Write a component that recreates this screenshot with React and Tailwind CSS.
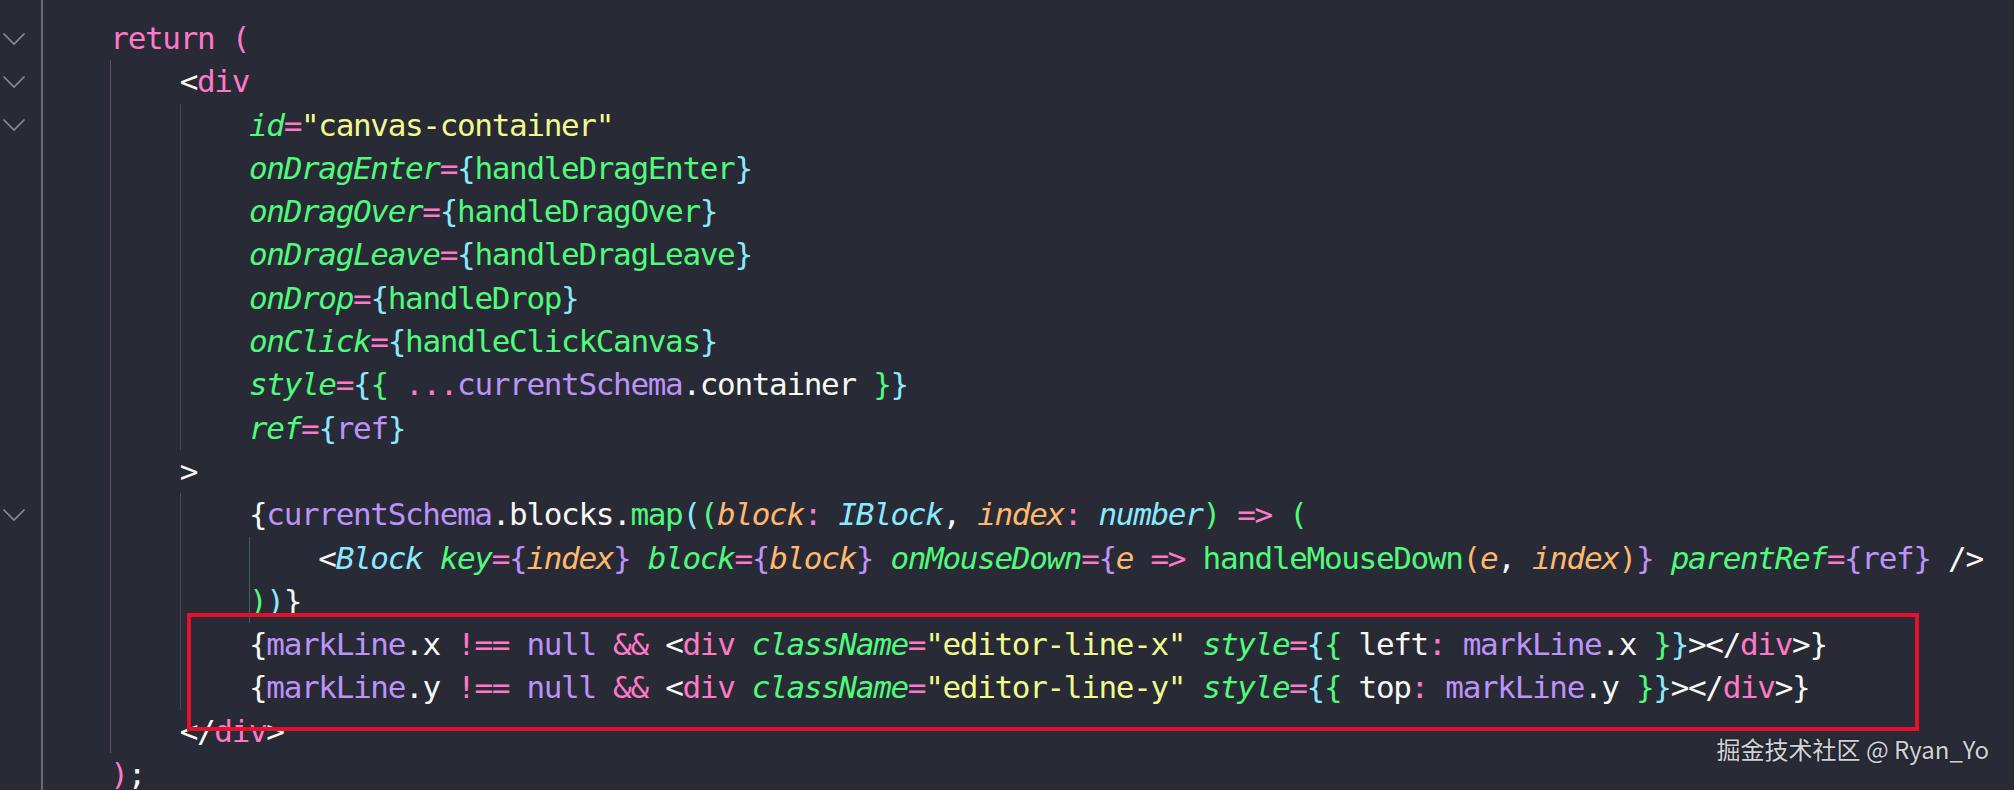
const C = {
  pk: "text-[#ff79c6]",
  gr: "text-[#50fa7b]",
  gri: "text-[#50fa7b] italic",
  ye: "text-[#f1fa8c]",
  cy: "text-[#8be9fd]",
  cyi: "text-[#8be9fd] italic",
  pu: "text-[#bd93f9]",
  or: "text-[#ffb86c]",
  ori: "text-[#ffb86c] italic",
  wh: "text-[#f8f8f2]",
};

const GUIDE = {
  pink: "left-[69px] bg-[#74466a]",
  grey: "left-[139px] bg-[#474a57]",
  teal: "left-[208px] bg-[#3b6457]",
};

const attrLine = (name, value) => ({
  indent: 12,
  guides: ["pink", "grey"],
  tokens: [["gri", name], ["pk", "="], ["cy", "{"], ["gr", value], ["cy", "}"]],
});

const markLine = (axis, prop) => ({
  indent: 12,
  guides: ["pink", "grey"],
  tokens: [
    ["wh", "{"], ["pu", "markLine"], ["wh", "."], ["wh", axis], ["wh", " "],
    ["pk", "!=="], ["wh", " "], ["pu", "null"], ["wh", " "], ["pk", "&&"], ["wh", " "],
    ["wh", "<"], ["pk", "div"], ["wh", " "], ["gri", "className"], ["pk", "="],
    ["ye", `"editor-line-${axis}"`], ["wh", " "], ["gri", "style"], ["pk", "="],
    ["cy", "{"], ["gr", "{"], ["wh", " "], ["wh", prop], ["pk", ":"], ["wh", " "],
    ["pu", "markLine"], ["wh", "."], ["wh", axis], ["wh", " "], ["gr", "}"], ["cy", "}"],
    ["wh", "></"], ["pk", "div"], ["wh", ">"], ["wh", "}"],
  ],
});

const lines = [
  { indent: 4, fold: true, guides: [], tokens: [["pk", "return"], ["wh", " "], ["pk", "("]] },
  { indent: 8, fold: true, guides: ["pink"], tokens: [["wh", "<"], ["pk", "div"]] },
  {
    indent: 12,
    fold: true,
    guides: ["pink", "grey"],
    tokens: [["gri", "id"], ["pk", "="], ["ye", '"canvas-container"']],
  },
  attrLine("onDragEnter", "handleDragEnter"),
  attrLine("onDragOver", "handleDragOver"),
  attrLine("onDragLeave", "handleDragLeave"),
  attrLine("onDrop", "handleDrop"),
  attrLine("onClick", "handleClickCanvas"),
  {
    indent: 12,
    guides: ["pink", "grey"],
    tokens: [
      ["gri", "style"], ["pk", "="], ["cy", "{"], ["gr", "{"], ["wh", " "], ["pk", "..."],
      ["pu", "currentSchema"], ["wh", "."], ["wh", "container"], ["wh", " "], ["gr", "}"], ["cy", "}"],
    ],
  },
  {
    indent: 12,
    guides: ["pink", "grey"],
    tokens: [["gri", "ref"], ["pk", "="], ["cy", "{"], ["pu", "ref"], ["cy", "}"]],
  },
  { indent: 8, guides: ["pink"], tokens: [["wh", ">"]] },
  {
    indent: 12,
    fold: true,
    guides: ["pink", "grey"],
    tokens: [
      ["wh", "{"], ["pu", "currentSchema"], ["wh", "."], ["wh", "blocks"], ["wh", "."], ["gr", "map"],
      ["cy", "("], ["gr", "("], ["ori", "block"], ["pk", ":"], ["wh", " "], ["cyi", "IBlock"],
      ["wh", ","], ["wh", " "], ["ori", "index"], ["pk", ":"], ["wh", " "], ["cyi", "number"],
      ["gr", ")"], ["wh", " "], ["pk", "=>"], ["wh", " "], ["gr", "("],
    ],
  },
  {
    indent: 16,
    guides: ["pink", "grey", "teal"],
    tokens: [
      ["wh", "<"], ["cyi", "Block"], ["wh", " "], ["gri", "key"], ["pk", "="], ["pu", "{"],
      ["ori", "index"], ["pu", "}"], ["wh", " "], ["gri", "block"], ["pk", "="], ["pu", "{"],
      ["ori", "block"], ["pu", "}"], ["wh", " "], ["gri", "onMouseDown"], ["pk", "="], ["pu", "{"],
      ["ori", "e"], ["wh", " "], ["pk", "=>"], ["wh", " "], ["gr", "handleMouseDown"], ["or", "("],
      ["ori", "e"], ["wh", ","], ["wh", " "], ["ori", "index"], ["or", ")"], ["pu", "}"], ["wh", " "],
      ["gri", "parentRef"], ["pk", "="], ["pu", "{"], ["pu", "ref"], ["pu", "}"], ["wh", " "], ["wh", "/>"],
    ],
  },
  {
    indent: 12,
    guides: ["pink", "grey", "teal"],
    tokens: [["gr", ")"], ["cy", ")"], ["wh", "}"]],
  },
  markLine("x", "left"),
  markLine("y", "top"),
  { indent: 8, guides: ["pink"], tokens: [["wh", "</"], ["pk", "div"], ["wh", ">"]] },
  { indent: 4, guides: [], tokens: [["pk", ")"], ["wh", ";"]] },
];

function Chevron() {
  return (
    <svg width="24" height="14" viewBox="0 0 24 14" fill="none">
      <polyline points="1.5,1.5 12,12 22.5,1.5" stroke="#8a8c96" strokeWidth="1.6" />
    </svg>
  );
}

export default function App() {
  return (
    <div className="relative h-[790px] w-[2014px] overflow-hidden bg-[#282a36] font-['DejaVu_Sans_Mono',monospace] text-[31px] tracking-[-1.33px]">
      <div className="flex h-full">
        <div className="h-full w-[43px] shrink-0 border-r-2 border-[#666976] pt-[17px]">
          {lines.map((line, i) => (
            <div key={i} className="flex h-[43.3px] items-center pl-[2px]">
              {line.fold ? <Chevron /> : null}
            </div>
          ))}
        </div>
        <div className="-ml-[2px] flex-1 pt-[17px]">
          {lines.map((line, i) => (
            <div key={i} className="relative h-[43.3px] whitespace-pre leading-[43.3px]">
              {line.guides.map((g) => (
                <span key={g} className={`absolute top-0 h-full w-px ${GUIDE[g]}`} />
              ))}
              <span>{" ".repeat(line.indent)}</span>
              {line.tokens.map(([c, text], j) => (
                <span key={j} className={C[c]}>
                  {text}
                </span>
              ))}
            </div>
          ))}
        </div>
      </div>

      <div className="absolute left-[187px] top-[613px] h-[118px] w-[1732px] border-4 border-[#e5112b]" />

      <div className="absolute right-[25px] top-[737px] font-['Noto_Sans_CJK_SC','Noto_Sans',sans-serif] text-[24px] leading-none tracking-normal text-[#d2d3d6] [text-shadow:0_0_2px_rgba(0,0,0,0.6)]">
        掘金技术社区 @ Ryan_Yo
      </div>
    </div>
  );
}
